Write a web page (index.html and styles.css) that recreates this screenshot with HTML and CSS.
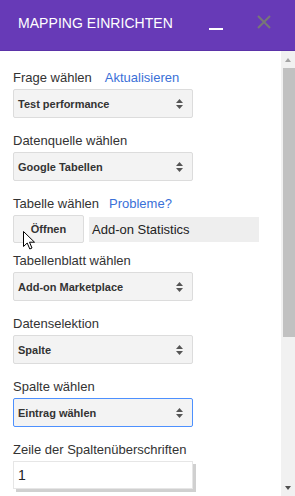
FILE: index.html
```html
<!DOCTYPE html>
<html lang="de">
<head>
<meta charset="utf-8">
<title>Mapping einrichten</title>
<link rel="stylesheet" href="styles.css">
</head>
<body>
<div class="dialog">
  <header class="titlebar">
    <div class="title">MAPPING EINRICHTEN</div>
    <div class="minimize"></div>
    <svg class="close" width="14" height="14" viewBox="0 0 14 14"><path d="M1 1 L13 13 M13 1 L1 13" stroke="#777" stroke-width="2" fill="none"/></svg>
  </header>
  <div class="main">
    <div class="content">
      <div class="field-label">Frage wählen<a class="link link-wide">Aktualisieren</a></div>
      <div class="select"><span>Test performance</span><svg class="arrows" width="7" height="10" viewBox="0 0 7 10"><path d="M0 4 L3.5 0 L7 4 Z M0 6 L3.5 10 L7 6 Z" fill="#555"/></svg></div>

      <div class="field-label">Datenquelle wählen</div>
      <div class="select"><span>Google Tabellen</span><svg class="arrows" width="7" height="10" viewBox="0 0 7 10"><path d="M0 4 L3.5 0 L7 4 Z M0 6 L3.5 10 L7 6 Z" fill="#555"/></svg></div>

      <div class="field-label">Tabelle wählen<a class="link">Probleme?</a></div>
      <div class="file-row">
        <div class="button">Öffnen</div>
        <div class="file-name">Add-on Statistics</div>
      </div>

      <div class="field-label">Tabellenblatt wählen</div>
      <div class="select"><span>Add-on Marketplace</span><svg class="arrows" width="7" height="10" viewBox="0 0 7 10"><path d="M0 4 L3.5 0 L7 4 Z M0 6 L3.5 10 L7 6 Z" fill="#555"/></svg></div>

      <div class="field-label">Datenselektion</div>
      <div class="select"><span>Spalte</span><svg class="arrows" width="7" height="10" viewBox="0 0 7 10"><path d="M0 4 L3.5 0 L7 4 Z M0 6 L3.5 10 L7 6 Z" fill="#555"/></svg></div>

      <div class="field-label">Spalte wählen</div>
      <div class="select focused"><span>Eintrag wählen</span><svg class="arrows" width="7" height="10" viewBox="0 0 7 10"><path d="M0 4 L3.5 0 L7 4 Z M0 6 L3.5 10 L7 6 Z" fill="#555"/></svg></div>

      <div class="field-label">Zeile der Spaltenüberschriften</div>
      <div class="text-input">1</div>
    </div>
    <div class="scrollbar">
      <div class="sb-btn"><span class="tri-up"></span></div>
      <div class="thumb"></div>
      <div class="sb-track"></div>
      <div class="sb-btn"><span class="tri-down"></span></div>
    </div>
  </div>
  <svg class="cursor" width="13" height="19" viewBox="0 0 13 19"><path d="M0.5 0.5 V15.5 L4.2 12 L6.8 18 L9 17 L6.5 11.2 H11.5 Z" fill="#fff" stroke="#000" stroke-width="1" stroke-linejoin="miter"/></svg>
</div>
</body>
</html>
```

FILE: styles.css
```css
html, body {
  margin: 0;
  padding: 0;
}
body {
  font-family: "Liberation Sans", Arial, sans-serif;
  background: #fff;
  width: 295px;
  height: 496px;
  overflow: hidden;
}
.dialog {
  position: relative;
  display: flex;
  flex-direction: column;
  height: 496px;
}
.titlebar {
  height: 50px;
  flex: none;
  background: #673ab7;
  border-bottom: 1px solid #5b33a8;
  display: flex;
  align-items: flex-start;
  padding: 0 24px 0 18px;
}
.title {
  flex: 1;
  margin-top: 15px;
  font-size: 14px;
  line-height: 16px;
  color: #fff;
  letter-spacing: 0.05px;
}
.minimize {
  width: 14px;
  height: 2px;
  background: #fff;
  margin-top: 28px;
  margin-right: 34px;
}
.close {
  margin-top: 15px;
  display: block;
}
.main {
  flex: 1;
  display: flex;
  min-height: 0;
}
.content {
  flex: 1;
  padding: 19px 0 0 13px;
  overflow: hidden;
}
.field-label {
  font-size: 13px;
  line-height: 15px;
  color: #333;
  margin-bottom: 4px;
  white-space: nowrap;
}
.link {
  color: #3a70d8;
  margin-left: 10px;
}
.link-wide {
  margin-left: 13px;
}
.select {
  width: 180px;
  height: 29px;
  box-sizing: border-box;
  border: 1px solid #dcdcdc;
  border-radius: 2px;
  background: #f3f3f3;
  display: flex;
  align-items: center;
  justify-content: space-between;
  padding: 0 9px 0 4px;
  font-size: 11px;
  font-weight: bold;
  color: #333;
  margin-bottom: 15px;
}
.select.focused {
  border-color: #4d90fe;
}
.arrows {
  display: block;
}
.file-row {
  display: flex;
  align-items: center;
  gap: 5px;
  margin-bottom: 10px;
}
.button {
  width: 71px;
  height: 28px;
  box-sizing: border-box;
  border: 1px solid #dcdcdc;
  border-radius: 2px;
  background: #f3f3f3;
  font-size: 11px;
  font-weight: bold;
  color: #333;
  display: flex;
  align-items: center;
  justify-content: center;
}
.file-name {
  width: 170px;
  height: 25px;
  box-sizing: border-box;
  background: #eeeeee;
  font-size: 13px;
  line-height: 25px;
  padding-left: 3px;
  color: #222;
}
.text-input {
  width: 180px;
  height: 28px;
  box-sizing: border-box;
  border: 1px solid #e6e6e6;
  background: #fff;
  box-shadow: 3px 3px 0 #d0d0d0;
  font-size: 14px;
  line-height: 26px;
  padding-left: 4px;
  color: #222;
}
.scrollbar {
  width: 14px;
  flex: none;
  background: #f1f1f1;
  display: flex;
  flex-direction: column;
}
.sb-btn {
  height: 17px;
  flex: none;
  display: flex;
  align-items: center;
  justify-content: center;
}
.tri-up {
  width: 0;
  height: 0;
  border-left: 3.5px solid transparent;
  border-right: 3.5px solid transparent;
  border-bottom: 4px solid #a3a3a3;
}
.tri-down {
  width: 0;
  height: 0;
  border-left: 3.5px solid transparent;
  border-right: 3.5px solid transparent;
  border-top: 4px solid #505050;
}
.thumb {
  height: 269px;
  flex: none;
  margin-left: 2px;
  background: #c1c1c1;
}
.sb-track {
  flex: 1;
}
.cursor {
  position: absolute;
  left: 23px;
  top: 231px;
  display: block;
}
```
